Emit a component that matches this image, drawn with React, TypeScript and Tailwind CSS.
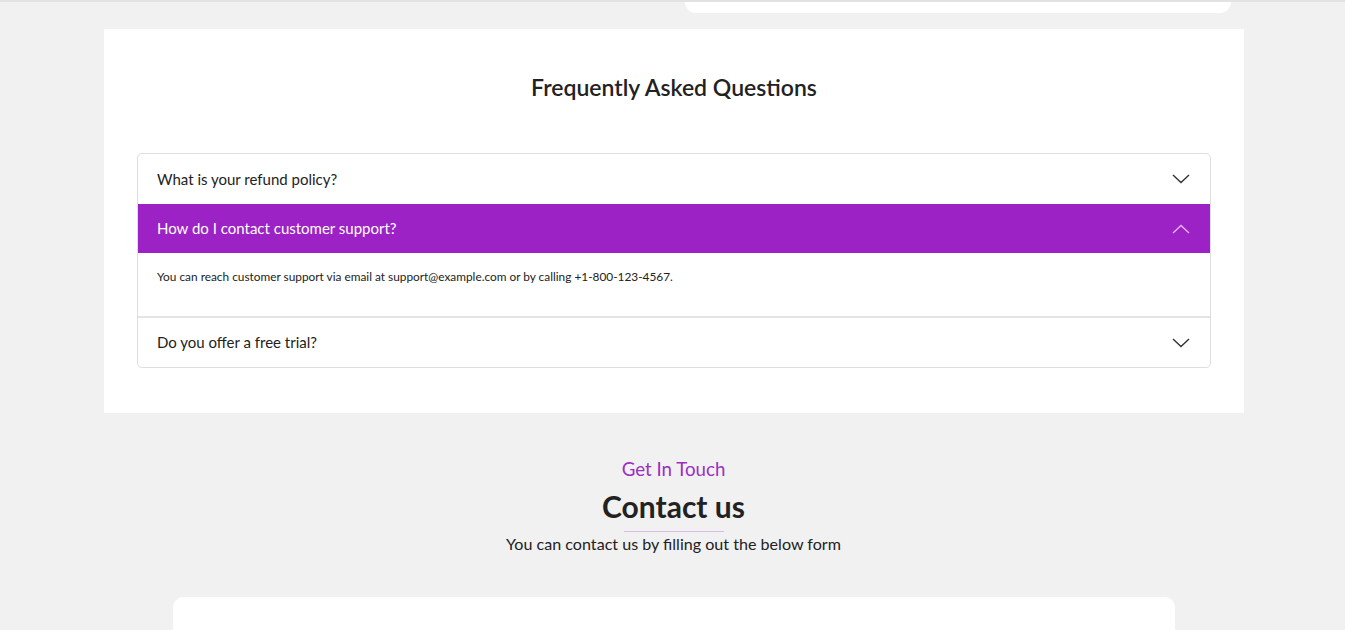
import React from "react";

const Chevron = ({ up, color }: { up?: boolean; color: string }) => (
  <svg width="18" height="10" viewBox="0 0 18 10" fill="none">
    {up ? (
      <path d="M1 9 L9 1.5 L17 9" stroke={color} strokeWidth="1.4" />
    ) : (
      <path d="M1 1 L9 8.5 L17 1" stroke={color} strokeWidth="1.4" />
    )}
  </svg>
);

export default function App() {
  return (
    <div
      className="min-h-[630px] bg-[#f1f1f1] border-t-2 border-[#e2e2e2]"
      style={{ fontFamily: "Lato, 'Noto Sans', sans-serif" }}
    >
      <div className="ml-[685px] w-[546px] h-[11px] bg-white rounded-b-[12px]" />
      <div className="ml-[104px] w-[1140px] mt-[16px] bg-white pt-[43px] pb-[45px] px-[33px]">
        <h2 className="text-center text-[23px] font-semibold text-[#222] leading-[30px]">
          Frequently Asked Questions
        </h2>
        <div className="mt-[51px] border border-[#dedede] rounded-[5px] overflow-hidden">
          <div className="h-[50px] flex items-center justify-between pl-[19px] pr-[20px]">
            <span className="text-[15px] text-[#222]">What is your refund policy?</span>
            <Chevron color="#333" />
          </div>
          <div className="h-[49px] flex items-center justify-between pl-[19px] pr-[20px] bg-[#9c22c5]">
            <span className="text-[15px] text-white">How do I contact customer support?</span>
            <Chevron up color="#e6b3f5" />
          </div>
          <div className="h-[65px] pl-[19px] pt-[16px] border-b-2 border-[#e4e4e4]">
            <p className="text-[11.85px] text-[#222] leading-[16px]">
              You can reach customer support via email at support@example.com or by calling +1-800-123-4567.
            </p>
          </div>
          <div className="h-[49px] flex items-center justify-between pl-[19px] pr-[20px]">
            <span className="text-[15px] text-[#222]">Do you offer a free trial?</span>
            <Chevron color="#333" />
          </div>
        </div>
      </div>
      <div className="flex flex-col items-center pt-[44px] pl-[2px]">
        <div className="text-[18.7px] text-[#9c2ec4] leading-[24px]">Get In Touch</div>
        <div className="text-[30px] font-bold text-[#222] leading-[38px] mt-[6px]">Contact us</div>
        <div className="w-[100px] h-px bg-[#e0b8ee] mt-[6px]" />
        <div className="text-[16.1px] text-[#222] leading-[22px] mt-[1px]">
          You can contact us by filling out the below form
        </div>
      </div>
      <div className="ml-[173px] w-[1002px] h-[40px] mt-[42px] bg-white rounded-t-[10px]" />
    </div>
  );
}
